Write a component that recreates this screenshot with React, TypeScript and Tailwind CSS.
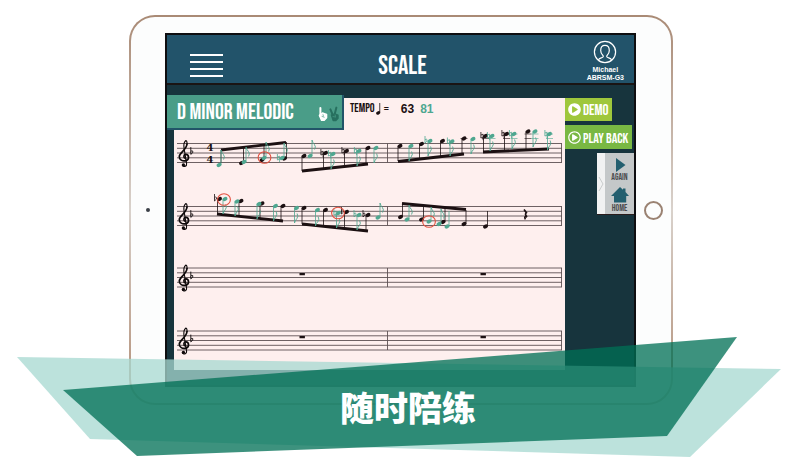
import { FaPlayCircle, FaRegPlayCircle } from 'react-icons/fa';

const INK = '#1c1012';
const TEAL = '#4fa790';
const RED = '#e2503f';

type Accidental = 'flat' | 'natural';

// x, y of the note head, y of the stem end
type Note = { x: number; y: number; end: number; acc?: Accidental; flag?: boolean };

const staves = [143, 206, 267.5, 330.5];

const played: Note[] = [
  { x: 219, y: 165, end: 150, flag: true },
  { x: 244, y: 162, end: 147, flag: true },
  { x: 264, y: 158, end: 142, flag: true },
  { x: 282, y: 158, end: 143, flag: true, acc: 'natural' },
  { x: 310, y: 156, end: 140, flag: true },
  { x: 333, y: 154, end: 169, flag: true, acc: 'natural' },
  { x: 359, y: 151, end: 166, flag: true, acc: 'natural' },
  { x: 376, y: 148, end: 163, flag: true },
  { x: 411, y: 146, end: 161, flag: true },
  { x: 430, y: 141, end: 156, flag: true, acc: 'flat' },
  { x: 452, y: 141.5, end: 156, flag: true, acc: 'natural' },
  { x: 473, y: 139, end: 154, flag: true },
  { x: 492, y: 136, end: 151, flag: true, acc: 'natural' },
  { x: 514, y: 134, end: 149, flag: true, acc: 'natural' },
  { x: 535, y: 131.5, end: 147, flag: true },
  { x: 549.5, y: 134, end: 150, flag: true, acc: 'natural' },
  { x: 225, y: 199, end: 214, flag: true },
  { x: 237, y: 201.5, end: 216, flag: true },
  { x: 259, y: 204, end: 219, flag: true },
  { x: 275.5, y: 206, end: 221, flag: true },
  { x: 296.5, y: 208, end: 223, flag: true },
  { x: 317.5, y: 210, end: 226, flag: true },
  { x: 338.5, y: 213, end: 228, flag: true, acc: 'natural' },
  { x: 359, y: 215, end: 230, flag: true, acc: 'flat' },
  { x: 378, y: 217.5, end: 203, flag: true },
  { x: 407, y: 219.5, end: 205, flag: true },
  { x: 429, y: 221.5, end: 207, flag: true },
  { x: 439, y: 224, end: 209, flag: true },
  { x: 447, y: 226.5, end: 211 },
];

const written: Note[] = [
  { x: 241.5, y: 163, end: 147 },
  { x: 262, y: 160, end: 144 },
  { x: 284.5, y: 158.5, end: 142 },
  { x: 304, y: 156, end: 171 },
  { x: 325.5, y: 153, end: 169, acc: 'natural' },
  { x: 346.5, y: 151, end: 166, acc: 'natural' },
  { x: 368, y: 148, end: 164 },
  { x: 400, y: 146, end: 161 },
  { x: 421.5, y: 144, end: 159 },
  { x: 442.5, y: 141, end: 156 },
  { x: 464, y: 138.5, end: 154 },
  { x: 485.5, y: 136, end: 152, acc: 'natural' },
  { x: 506.5, y: 134, end: 151, acc: 'natural' },
  { x: 528, y: 131.5, end: 150 },
  { x: 219.5, y: 199, end: 214, acc: 'flat' },
  { x: 241, y: 201, end: 216 },
  { x: 262, y: 203.5, end: 219 },
  { x: 283, y: 206, end: 221 },
  { x: 304, y: 208, end: 224 },
  { x: 325.5, y: 210, end: 226 },
  { x: 346.5, y: 212, end: 228, acc: 'flat' },
  { x: 368, y: 215, end: 231, acc: 'flat' },
  { x: 400.5, y: 217, end: 203 },
  { x: 421.5, y: 219.5, end: 205 },
  { x: 443, y: 222, end: 207 },
  { x: 464, y: 224, end: 210 },
  { x: 485.5, y: 226.5, end: 211 },
];

const beams = [
  [221, 150, 286, 142.5],
  [302, 171, 368, 164],
  [398, 161.5, 464, 154],
  [483, 152, 549, 149],
  [217, 214, 283, 221],
  [302, 224, 368, 231],
  [402, 203.5, 466, 209.5],
];

const mistakes = [
  [264.5, 157.5],
  [224, 199.5],
  [338, 213],
  [429, 221.5],
];

function NoteMark({ note, color }: { note: Note; color: string }) {
  const { x, y, end, acc, flag } = note;
  const up = end < y;
  const stem = up ? x + 2 : x - 2;
  const d = up ? 1 : -1;

  return (
    <g stroke={color} fill="none">
      <ellipse cx={x} cy={y} rx="2.6" ry="1.9" transform={`rotate(-24 ${x} ${y})`} fill={color} stroke="none" />
      <path d={`M${stem} ${y}V${end}`} strokeWidth="0.8" />
      {flag ? (
        <path d={`M${stem} ${end}q0.6 ${2.5 * d} 2.4 ${4.5 * d}t0.2 ${5 * d}`} strokeWidth="0.9" />
      ) : null}
      {acc === 'natural' ? (
        <path d={`M${x - 4.6} ${y - 4}v6l2.2-0.8M${x - 4.6} ${y - 1}l2.2-0.8v6`} strokeWidth="0.8" />
      ) : null}
      {acc === 'flat' ? <path d={`M${x - 5} ${y - 5}v7q2.8-2 2-3.4t-2 0.4`} strokeWidth="0.8" /> : null}
      {y < 139 ? <path d={`M${x - 3.5} 138.5h7`} strokeWidth="0.6" /> : null}
      {y < 135 ? <path d={`M${x - 3.5} 134h7`} strokeWidth="0.6" /> : null}
    </g>
  );
}

function Staff({ y, empty }: { y: number; empty: boolean }) {
  return (
    <g transform={`translate(0 ${y})`}>
      <path
        d="M177 0.5H562M177 5.3H562M177 10H562M177 14.8H562M177 19.5H562M387.5 0.5V19.5M561.5 0.5V19.5"
        stroke="#5d5052"
        strokeWidth="0.9"
      />
      <g fill="none" stroke="#0e090a" strokeLinecap="round">
        <path d="M185.5 15.5C183 14.5 183.6 11.3 186 11.4C189 11.6 189.6 16.5 186.2 17.6" strokeWidth="1.7" />
        <path d="M186.2 17.6C182.4 18.8 179 16.6 179.3 13.4C179.6 9.8 186.6 6.6 187 1" strokeWidth="1.7" />
        <path d="M187 1C187.2-1.2 186.4-2.8 185.6-2.2C183.6-0.6 183.6 2.8 184.2 6L186.6 20.5C187 23.4 184 24.2 182.8 22.6" strokeWidth="1.1" />
        <path d="M190.8 4.5V11.4Q193.6 9.6 192.8 8.2T190.8 8.6" strokeWidth="0.9" />
      </g>
      <circle cx="183.4" cy="22" r="1.7" fill="#0e090a" />
      {empty ? <path d="M299.5 5.5h5.4v2.2h-5.4zM480.5 5.5h5.4v2.2h-5.4z" fill={INK} /> : null}
    </g>
  );
}

function Score() {
  return (
    <svg viewBox="174 130 391 240" className="block w-full overflow-visible" role="img" aria-label="D minor melodic score">
      {staves.map((y, i) => (
        <Staff key={y} y={y} empty={i > 1} />
      ))}
      <g fontFamily="'DejaVu Serif', serif" fontWeight="700" fontSize="10" textAnchor="middle" fill={INK}>
        <text x="210" y="151">4</text>
        <text x="210" y="163">4</text>
      </g>
      {written.map((note) => (
        <NoteMark key={`${note.x}-${note.y}`} note={note} color={INK} />
      ))}
      {beams.map(([x1, y1, x2, y2]) => (
        <path key={`${x1}-${y1}`} d={`M${x1} ${y1}L${x2} ${y2}`} stroke={INK} strokeWidth="2.8" />
      ))}
      <path d="M221 150V163" stroke={INK} strokeWidth="0.7" />
      {played.map((note) => (
        <NoteMark key={`${note.x}-${note.y}`} note={note} color={TEAL} />
      ))}
      <path d="M524 209.5l2.4 3.2q-2 1.8 0.6 4.2q-3.4-1-1.6 2.4" fill="none" stroke={INK} strokeWidth="1.7" />
      {mistakes.map(([cx, cy]) => (
        <ellipse key={`${cx}-${cy}`} cx={cx} cy={cy} rx="6.4" ry="5.8" fill="none" stroke={RED} strokeWidth="1.1" />
      ))}
    </svg>
  );
}

function Hands() {
  return (
    <svg viewBox="0 0 23 16" className="mt-1 h-4 w-[23px]" fill="none" strokeLinecap="round" aria-hidden="true">
      <g stroke="white">
        <path d="M3.4 2v8" strokeWidth="2" />
        <path d="M2.4 9.4l3-2.4l4.2 1.4v3.4l-2.4 2.6H4.6z" fill="white" strokeWidth="1.4" strokeLinejoin="round" />
        <path d="M5 10.4l2.2 0.8M6 8.6l0.4 1.4" stroke="#4a9d88" strokeWidth="0.7" />
      </g>
      <g stroke="#27705f">
        <path d="M13.4 3.4l2.4 5.6M19.4 1.6l-1.8 7" strokeWidth="2" />
        <path d="M14.4 9l4-0.8l2.6 1v3l-2.2 2.4h-2.6z" fill="#27705f" strokeWidth="1.4" strokeLinejoin="round" />
        <path d="M16 10.6l2.6 0.4M18.2 9l0.2 1.2" stroke="#4a9d88" strokeWidth="0.7" />
      </g>
    </svg>
  );
}

function TopBar() {
  return (
    <header className="grid h-[50px] grid-cols-3 items-center border-b-2 border-[#1a1413] bg-[#22536a] text-white">
      <button type="button" aria-label="Menu" className="ml-[23px] mt-3 flex w-[33px] flex-col gap-[5px]">
        <span className="h-[2px] w-full bg-white" />
        <span className="h-[2px] w-full bg-white" />
        <span className="h-[2px] w-full bg-white" />
        <span className="h-[2px] w-full bg-white" />
      </button>
      <h1 className="mt-4 pl-1 text-center font-['Bebas_Neue','Roboto_Condensed','Open_Sans_Condensed','Liberation_Sans_Narrow',sans-serif] text-[26px] leading-6">
        SCALE
      </h1>
      <div className="mr-[10px] flex flex-col items-center justify-self-end pt-1 font-['Liberation_Sans',sans-serif] text-[7px] leading-[8px] font-bold">
        <svg viewBox="0 0 24 24" className="mb-[2px] size-6" fill="none" stroke="white" strokeWidth="1.2" aria-hidden="true">
          <circle cx="12" cy="12" r="10.6" />
          <path d="M5.5 19.8c0.6-2 4.8-1.8 4.8-3.4c0-1.2-2.6-2.4-2.6-6c0-3.2 1.8-5 4.3-5s4.3 1.8 4.3 5c0 3.6-2.6 4.8-2.6 6c0 1.6 4.2 1.4 4.8 3.4" />
        </svg>
        <span>Michael</span>
        <span>ABRSM-G3</span>
      </div>
    </header>
  );
}

function SideActions() {
  return (
    <aside className="flex w-[69px] shrink-0 flex-col items-start gap-1 font-['Bebas_Neue','Roboto_Condensed','Open_Sans_Condensed','Liberation_Sans_Narrow',sans-serif] text-white">
      <button type="button" className="flex h-[23px] w-[47px] items-center gap-[2px] bg-[#9fc73c] pl-[3px] text-[15px] leading-4">
        <FaPlayCircle className="size-[13px] shrink-0" />
        <span className="pt-[3px]">DEMO</span>
      </button>
      <button type="button" className="flex h-6 w-[67px] items-center gap-[2px] bg-[#79b843] pl-[3px] text-[14px] leading-4 whitespace-nowrap">
        <FaRegPlayCircle className="size-[13px] shrink-0" />
        <span className="pt-[3px]">PLAY BACK</span>
      </button>
      <div className="flex w-[37px] self-end border-b border-[#2a1c1c] bg-[#c4c8c9] text-[9px] leading-[8px] text-[#4b4b4d]">
        <div className="flex w-2 shrink-0 items-center bg-[#f1f2f2]">
          <svg viewBox="0 0 8 16" className="h-4 w-2" fill="none" stroke="#c9cccc" aria-hidden="true">
            <path d="M2 1l4 7l-4 7" />
          </svg>
        </div>
        <div className="flex flex-1 flex-col items-center gap-1 pt-1 pb-px">
          <button type="button" className="flex flex-col items-center gap-px">
            <svg viewBox="0 0 18 16" className="h-4 w-[18px]" fill="#235f6f" aria-hidden="true">
              <path d="M5 1l9.5 7l-9.5 7z" />
            </svg>
            AGAIN
          </button>
          <button type="button" className="flex flex-col items-center gap-px">
            <svg viewBox="0 0 20 18" className="h-[18px] w-5" fill="#235f6f" aria-hidden="true">
              <path d="M10 1l3 2.7V2.5h2.5v3.6L19 10h-2.8v6.5H4V10H1z" />
            </svg>
            HOME
          </button>
        </div>
      </div>
    </aside>
  );
}

function ScaleScreen() {
  return (
    <div className="min-w-0 flex-1 border-2 border-[#0e0e10] bg-[#17343d]">
      <TopBar />
      <div className="flex pt-[13px] pb-[15px] pl-[7px]">
        <main className="min-w-0 flex-1 bg-[#feefee]">
          <div className="flex">
            <div className="-mt-[3px] -ml-[7px] flex h-[35px] w-[177px] items-center justify-between border-r-2 border-b-2 border-[#215468] bg-[#4a9d88] pr-[2px] pl-[10px] text-white">
              <h2 className="pt-[3px] font-['Bebas_Neue','Roboto_Condensed','Open_Sans_Condensed','Liberation_Sans_Narrow',sans-serif] text-[22px] leading-6 whitespace-nowrap">
                D MINOR MELODIC
              </h2>
              <Hands />
            </div>
            <div className="flex h-[22px] items-center pl-[6px] text-[#1c1012]">
              <span className="font-['Bebas_Neue','Roboto_Condensed','Open_Sans_Condensed','Liberation_Sans_Narrow',sans-serif] text-[12px]">
                TEMPO
              </span>
              <svg viewBox="0 0 6 14" className="h-[14px] w-[6px]" fill="#1c1012" aria-hidden="true">
                <path d="M4.4 1h0.8v9.5h-0.8z" />
                <ellipse cx="3.2" cy="11" rx="2.2" ry="1.6" transform="rotate(-24 3 11)" />
              </svg>
              <span className="ml-[3px] text-[9px] font-bold">=</span>
              <span className="ml-3 font-['Liberation_Sans',sans-serif] text-[12px] font-bold">63</span>
              <span className="ml-[6px] font-['Liberation_Sans_Narrow','Liberation_Sans',sans-serif] text-[12px] font-bold text-[#4fa790]">81</span>
            </div>
          </div>
          <Score />
        </main>
        <SideActions />
      </div>
    </div>
  );
}

function Tablet() {
  return (
    <div className="rounded-[26px] bg-linear-to-b from-[#a98a75] via-[#d9d2cc] to-[#b08c74] p-[2px]">
      <div className="flex items-stretch rounded-[24px] bg-[#fcfdfd] py-4">
        <div className="flex w-[34px] shrink-0 items-center justify-center">
          <span className="size-1 rounded-full bg-[#3b4047]" />
        </div>
        <ScaleScreen />
        <div className="flex w-[35px] shrink-0 items-center justify-center">
          <button type="button" aria-label="Home" className="size-[19px] rounded-full border-2 border-[#9a8272]" />
        </div>
      </div>
    </div>
  );
}

export default function App() {
  return (
    <div className="relative overflow-hidden bg-white pt-[15px] pr-[127px] pb-[58px] pl-[129px]">
      <Tablet />
      <div className="pointer-events-none absolute inset-0 flex flex-col justify-end">
        <svg viewBox="0 0 800 463" preserveAspectRatio="none" className="absolute inset-0 size-full" aria-hidden="true">
          <path d="M17 357L781 369L690 457L90 439Z" fill="#a7d9d1" fillOpacity="0.76" />
          <path d="M63 390L737 337L667 436L137 456Z" fill="#007056" fillOpacity="0.76" />
        </svg>
        <p className="relative pb-8 pl-4 text-center font-['Noto_Sans_CJK_SC',sans-serif] text-[34px] leading-[48px] font-black text-white">
          随时陪练
        </p>
      </div>
    </div>
  );
}
